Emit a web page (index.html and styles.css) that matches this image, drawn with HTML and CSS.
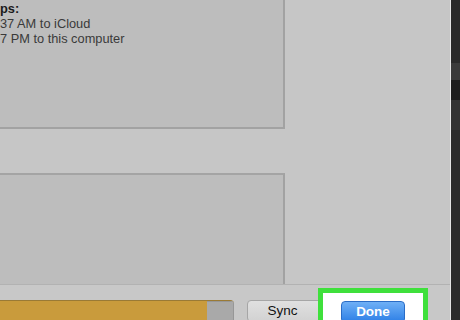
FILE: index.html
```html
<!DOCTYPE html>
<html>
<head>
	<meta charset="UTF-8">
	<title>Backups</title>
	<link rel="stylesheet" href="styles.css">
</head>
<body>
	<div class="window">
		<div class="main">
			<div class="content">
				<div class="panel top">
					<div class="backups">
						<div class="head">ps:</div>
						<div>37 AM to iCloud</div>
						<div>7 PM to this computer</div>
					</div>
				</div>
				<div class="panel lower"></div>
			</div>
			<div class="bottombar">
				<div class="capacity">
					<div class="used"></div>
					<div class="free"></div>
				</div>
				<div class="btn sync">Sync</div>
				<div class="mark">
					<div class="btn done">Done</div>
				</div>
			</div>
		</div>
		<div class="sidebar"></div>
	</div>
</body>
</html>
```

FILE: styles.css
```css
*{
	margin: 0px;
	padding: 0px;
	box-sizing: border-box;
}
body{
	width: 460px;
	height: 320px;
	overflow: hidden;
	font-family: "Liberation Sans", Arial, sans-serif;
	background: #c6c6c6;
}
.window{
	display: flex;
	height: 320px;
	overflow: hidden;
}
.main{
	width: 451px;
	display: flex;
	flex-direction: column;
	background: #c6c6c6;
	border-right: 1px solid #e4e4e4;
}
.content{
	height: 285px;
	flex-shrink: 0;
	display: flex;
	flex-direction: column;
	border-bottom: 1px solid #b2b2b2;
}
.panel{
	width: 285px;
	background: #bdbdbd;
	border-right: 2px solid #a2a2a2;
}
.top{
	height: 129px;
	border-bottom: 2px solid #a2a2a2;
}
.lower{
	margin-top: 44px;
	flex: 1;
	border-top: 2px solid #a4a4a4;
}
.backups{
	padding-top: 1px;
	font-size: 12.8px;
	line-height: 15px;
	color: #3a3a3a;
}
.backups .head{
	font-weight: bold;
	color: #1a1a1a;
}
.bottombar{
	flex: 1;
	display: flex;
	align-items: stretch;
	background: #c8c8c8;
}
.capacity{
	margin-top: 15px;
	margin-bottom: -6px;
	width: 234px;
	display: flex;
	border-radius: 0 4px 0 0;
	overflow: hidden;
	border-top: 1px solid #9a7a35;
}
.used{
	width: 207px;
	background: #c99b3c;
}
.free{
	flex: 1;
	background: #a9a9a9;
	border-right: 1px solid #979797;
	border-top: 1px solid #979797;
}
.btn{
	height: 22px;
	border-radius: 4px;
	font-size: 13.5px;
	line-height: 20px;
	text-align: center;
}
.sync{
	margin-top: 15px;
	margin-left: 13px;
	width: 80px;
	padding-right: 9px;
	color: #111;
	background: linear-gradient(#e0e0e0, #d2d2d2);
	border: 1px solid #a6a6a6;
}
.mark{
	margin-top: 3px;
	margin-bottom: -12px;
	margin-left: -9px;
	width: 110px;
	background: #ffffff;
	border: 5px solid #3fe03c;
	padding: 8px 0 0 18px;
}
.done{
	width: 64px;
	color: #ffffff;
	font-weight: bold;
	background: linear-gradient(#6fb0f6, #2d7fe6);
	border: 1px solid #2a6cc6;
}
.sidebar{
	flex: 1;
	background: linear-gradient(#2a2a2a 0px, #2a2a2a 63px, #3a3a3a 63px, #3a3a3a 80px, #1e1e1e 80px, #1e1e1e 100px, #333 100px, #333 130px, #2b2b2b 130px);
}
```
